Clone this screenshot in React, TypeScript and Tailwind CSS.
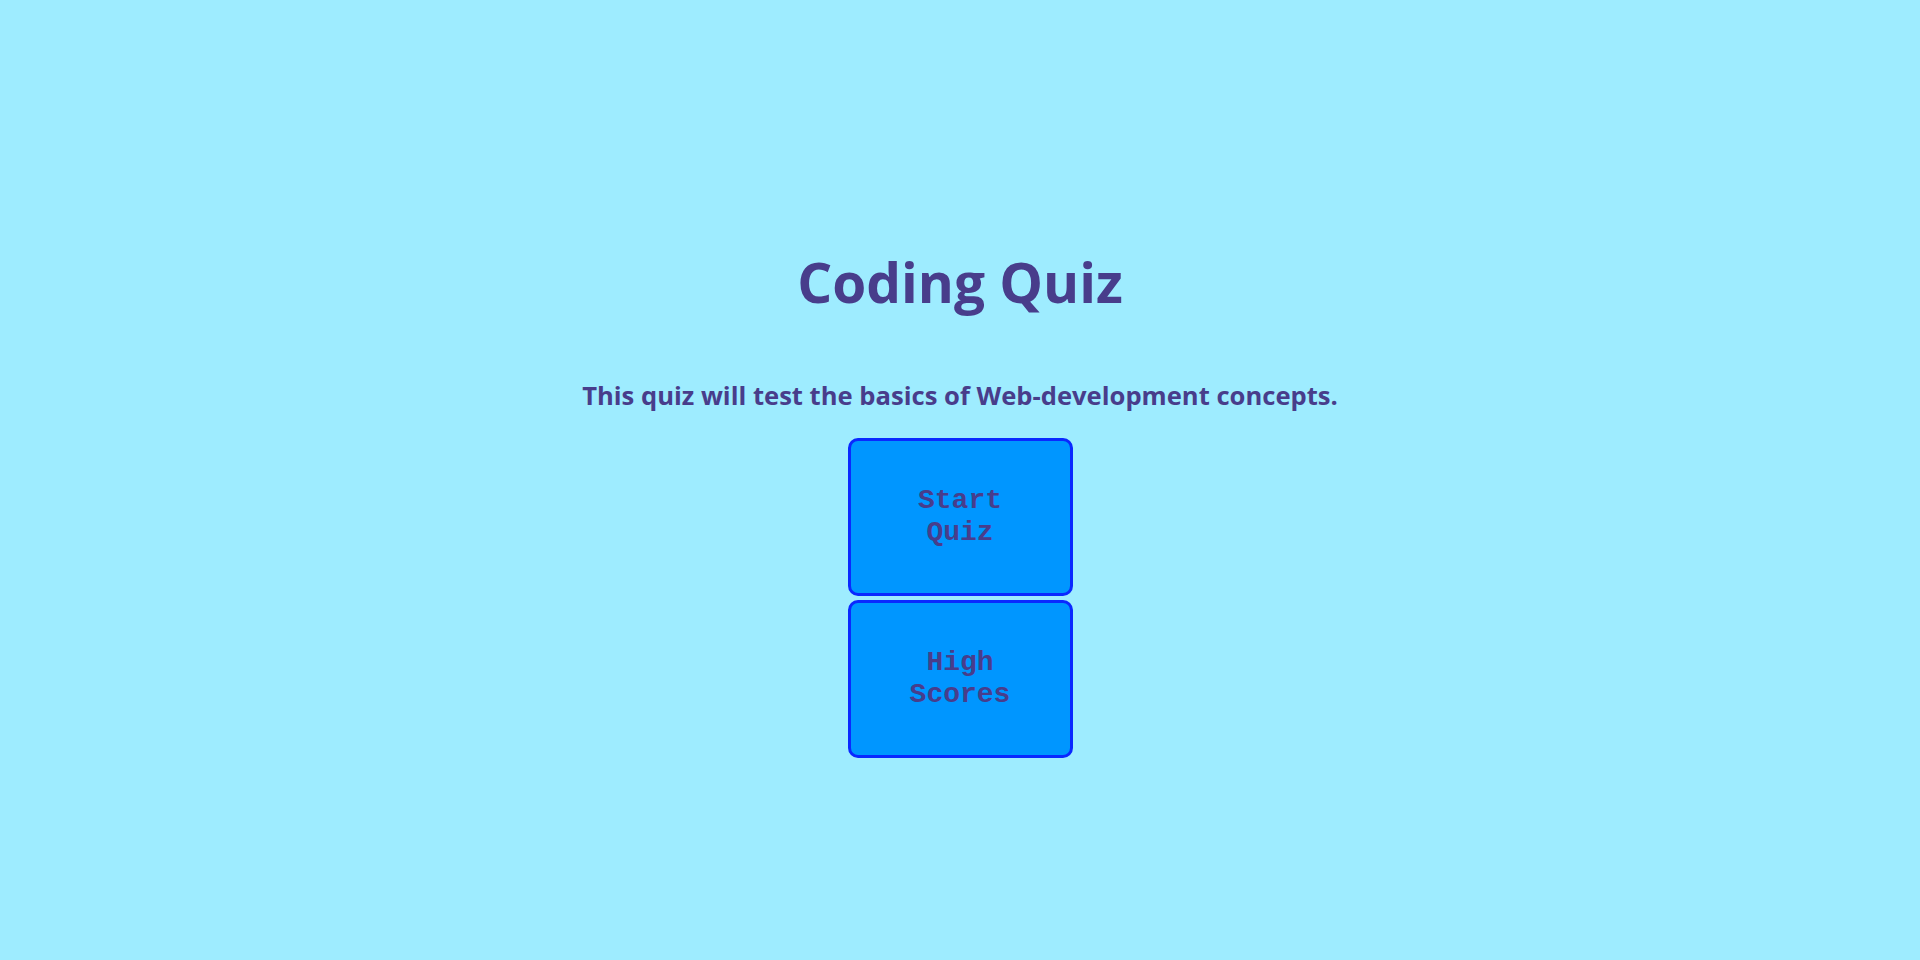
export default function App() {
  return (
    <div className="min-h-screen w-full bg-[#9eecff] flex flex-col items-center pt-[250px] font-['Open_Sans',sans-serif]">
      <h1 className="text-[55px] leading-[64px] font-bold text-[#483d8b]">Coding Quiz</h1>
      <h2 className="mt-[66px] text-[25.6px] leading-[32px] font-bold text-[#483d8b]">
        This quiz will test the basics of Web-development concepts.
      </h2>
      <div className="mt-[26px] flex flex-col items-center gap-[4px]">
        <button className="w-[225px] h-[158px] px-[30px] rounded-[10px] border-[3px] border-[#0a28ff] bg-[#0096ff] text-[#483d8b] text-[28px] leading-[32px] font-bold font-['Liberation_Mono',monospace]">
          Start Quiz
        </button>
        <button className="w-[225px] h-[158px] px-[30px] rounded-[10px] border-[3px] border-[#0a28ff] bg-[#0096ff] text-[#483d8b] text-[28px] leading-[32px] font-bold font-['Liberation_Mono',monospace]">
          High Scores
        </button>
      </div>
    </div>
  )
}
